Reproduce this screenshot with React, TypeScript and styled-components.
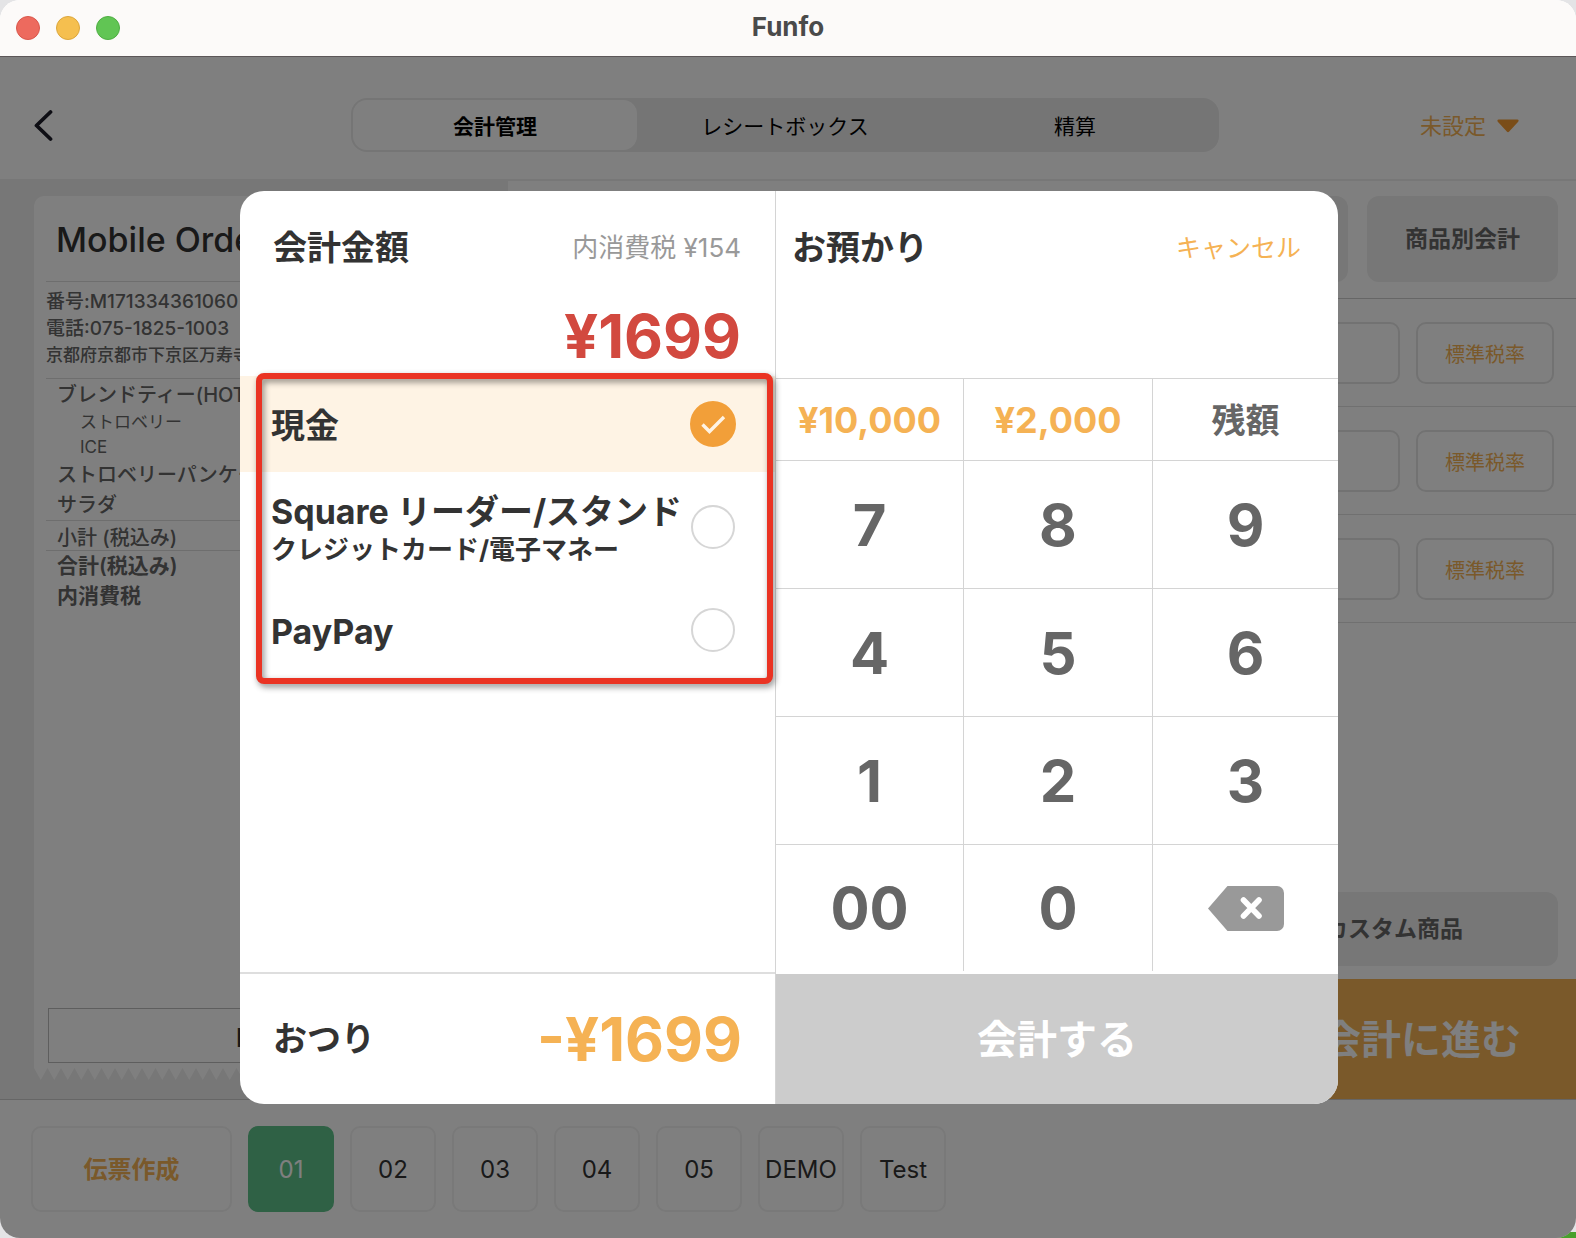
import React, { useState } from "react";
import styled, { createGlobalStyle } from "styled-components";

const FONT = `Inter, "Noto Sans CJK JP", "Noto Sans", sans-serif`;

const color = {
  ink: "#333333",
  mid: "#666666",
  faint: "#999999",
  orange: "#f5b254",
  red: "#d2493f",
  line: "#d4d4d4",
  panel: "#eeeeee",
};

const GlobalStyle = createGlobalStyle`
  * { box-sizing: border-box; }
  body { margin: 0; font-family: ${FONT}; color: ${color.ink}; }
  button, input, select { font: inherit; color: inherit; margin: 0; padding: 0; border: 0; background: none; }
  button { cursor: pointer; }
  h1, h2, p, ul { margin: 0; padding: 0; font: inherit; list-style: none; }
`;

/* ---------- window ---------- */

const Desktop = styled.div`
  min-height: 100vh;
  display: flex;
  background: linear-gradient(#48a02c, #48a02c) right bottom / 32px 6px no-repeat, #e4e4e6;
`;

const Window = styled.div`
  flex: 1;
  min-width: 0;
  display: flex;
  flex-direction: column;
  border-radius: 20px;
  overflow: hidden;
  background: #ffffff;
`;

const TitleBar = styled.div`
  display: grid;
  grid-template-columns: 1fr auto 1fr;
  align-items: center;
  height: 57px;
  padding: 0 16px;
  background: #fcfaf9;
  border-bottom: 1px solid #5c5658;
`;

const Lights = styled.div`
  display: flex;
  gap: 16px;
`;

const Light = styled.button<{ $fill: string; $edge: string }>`
  width: 24px;
  height: 24px;
  border-radius: 50%;
  background: ${(p) => p.$fill};
  border: 1px solid ${(p) => p.$edge};
`;

const WindowTitle = styled.h1`
  padding-bottom: 2px;
  font-size: 26px;
  line-height: 32px;
  font-weight: 700;
  color: #4a4a4a;
`;

const Body = styled.div`
  position: relative;
  flex: 1;
  display: flex;
  flex-direction: column;
`;

/* ---------- header ---------- */

const Header = styled.header`
  display: grid;
  grid-template-columns: 1fr minmax(0, 868px) 1fr;
  align-items: center;
  padding: 41px 34px 27px 28px;
  border-bottom: 2px solid ${color.panel};
`;

const BackButton = styled.button`
  justify-self: start;
  padding: 2px 6px 0;
  display: flex;
`;

const Tabs = styled.nav`
  display: grid;
  grid-template-columns: repeat(3, 1fr);
  gap: 6px;
  height: 54px;
  padding: 2px;
  border-radius: 16px;
  background: #ebebeb;
`;

const Tab = styled.button<{ $active?: boolean }>`
  padding-top: 3px;
  border-radius: 14px;
  font-size: 21px;
  line-height: 28px;
  color: #000000;
  font-weight: ${(p) => (p.$active ? 700 : 400)};
  background: ${(p) => (p.$active ? "#ffffff" : "transparent")};
`;

const Staff = styled.label`
  justify-self: end;
  display: flex;
  align-items: center;
  gap: 10px;
  padding: 2px 23px 0 0;
  color: ${color.orange};
`;

const StaffSelect = styled.select`
  appearance: none;
  font-size: 22px;
  line-height: 30px;
`;

/* ---------- main area ---------- */

const Main = styled.main`
  flex: 1;
  display: flex;
`;

const ReceiptPane = styled.section`
  flex: 0 0 508px;
  display: flex;
  flex-direction: column;
  padding: 15px 52px 19px 34px;
  background: ${color.panel};
`;

const Receipt = styled.article`
  flex: 1;
  display: flex;
  flex-direction: column;
  padding: 0 12px 5px;
  border-radius: 10px 10px 0 0;
  background: #ffffff;
  color: ${color.mid};
  font-weight: 500;
`;

const ShopName = styled.h2`
  padding: 22px 10px 19px;
  font-size: 34px;
  line-height: 44px;
  font-weight: 500;
  color: ${color.ink};
`;

const ReceiptInfo = styled.div`
  padding: 6px 0 9px;
  border-top: 1px solid #dcdcdc;
  line-height: 27px;
`;

const InfoLine = styled.p<{ $size: number }>`
  font-size: ${(p) => p.$size}px;
  white-space: nowrap;
`;

const ReceiptGroup = styled.ul<{ $pad: number }>`
  padding: ${(p) => p.$pad}px 11px 0;
  border-top: 1px solid #dcdcdc;
`;

const ReceiptItem = styled.li`
  font-size: 20px;
  line-height: 30px;
  white-space: nowrap;
`;

const ReceiptOption = styled.li`
  padding-left: 23px;
  font-size: 17px;
  line-height: 25px;
  font-weight: 400;
`;

const ReceiptSubtotal = styled.li`
  font-size: 20px;
  line-height: 24px;
`;

const ReceiptTotal = styled.li`
  font-size: 21px;
  line-height: 30px;
  font-weight: 600;
`;

const ReceiptButton = styled.button`
  margin: auto 2px 0;
  height: 55px;
  padding-top: 5px;
  border: 1px solid #bcbcbc;
  font-size: 25px;
  line-height: 32px;
  font-weight: 600;
  color: ${color.ink};
`;

const Teeth = styled.svg`
  display: block;
  width: 100%;
  height: 12px;
`;

const OrderPane = styled.section`
  flex: 1;
  min-width: 0;
  display: flex;
  flex-direction: column;
`;

const SplitRow = styled.div`
  display: grid;
  grid-template-columns: repeat(5, 1fr);
  gap: 19px;
  padding: 15px 18px 16px;
  border-bottom: 1px solid #cccccc;
`;

const SoftButton = styled.button<{ $height: number; $column: number }>`
  grid-column: ${(p) => p.$column};
  height: ${(p) => p.$height}px;
  border-radius: 12px;
  background: ${color.panel};
  font-size: 23px;
  line-height: 30px;
  font-weight: 700;
  color: ${color.mid};
  white-space: nowrap;
`;

const OrderRow = styled.div`
  display: flex;
  justify-content: flex-end;
  align-items: center;
  gap: 16px;
  height: 108px;
  padding: 1px 22px 0;
  border-bottom: 1px solid #e0e0e0;
`;

const OutlineButton = styled.button`
  width: 138px;
  height: 62px;
  padding-top: 4px;
  border: 2px solid #e4e4e4;
  border-radius: 10px;
  font-size: 20px;
  line-height: 28px;
  color: ${color.orange};
`;

const CustomRow = styled.div`
  display: grid;
  grid-template-columns: repeat(3, 1fr);
  gap: 24px;
  margin-top: auto;
  padding: 12px 18px 13px;
`;

const CheckoutRow = styled.div`
  display: flex;
  justify-content: flex-end;
`;

const CheckoutButton = styled.button`
  width: 310px;
  height: 120px;
  padding-top: 2px;
  background: ${color.orange};
  font-size: 40px;
  line-height: 48px;
  font-weight: 700;
  color: #ffffff;
  white-space: nowrap;
`;

/* ---------- slip bar ---------- */

const SlipBar = styled.footer`
  display: flex;
  gap: 16px;
  padding: 26px 31px;
  border-top: 1px solid #cccccc;
`;

const SlipButton = styled.button<{ $active?: boolean }>`
  width: 86px;
  height: 86px;
  padding-top: 2px;
  border: 2px solid ${(p) => (p.$active ? "#5ec28a" : "#f2f2f2")};
  border-radius: 10px;
  background: ${(p) => (p.$active ? "#5ec28a" : "transparent")};
  font-size: 24px;
  line-height: 32px;
  color: ${(p) => (p.$active ? "#ffffff" : color.ink)};
`;

const NewSlipButton = styled(SlipButton)`
  width: 201px;
  font-weight: 700;
  color: ${color.orange};
`;

/* ---------- payment dialog ---------- */

const Backdrop = styled.div`
  position: absolute;
  inset: 0;
  display: flex;
  align-items: center;
  justify-content: center;
  padding-left: 2px;
  background: rgba(0, 0, 0, 0.5);
`;

const Dialog = styled.div`
  display: grid;
  grid-template-columns: 536fr 562fr;
  width: 70%;
  max-width: 1098px;
  border-radius: 24px;
  overflow: hidden;
  background: #ffffff;
`;

const Column = styled.div<{ $divided?: boolean }>`
  display: flex;
  flex-direction: column;
  min-width: 0;
  border-right: ${(p) => (p.$divided ? `1px solid ${color.line}` : "0")};
`;

const AmountHead = styled.div`
  padding: 35px 34px 0 33px;
  height: 185px;
`;

const HeadLine = styled.div`
  display: flex;
  justify-content: space-between;
  align-items: center;
`;

const Heading = styled.h2`
  font-size: 34px;
  line-height: 44px;
  font-weight: 700;
`;

const TaxNote = styled.p`
  font-size: 26px;
  line-height: 32px;
  color: ${color.faint};
`;

const BigAmount = styled.p<{ $tone: string }>`
  font-size: 60px;
  line-height: 68px;
  font-weight: 700;
  text-align: right;
  color: ${(p) => p.$tone};
`;

const AmountLine = styled.div`
  padding-top: 32px;
`;

const Methods = styled.div`
  position: relative;
  display: flex;
  flex-direction: column;
  gap: 7px;
`;

const Method = styled.label<{ $selected: boolean }>`
  display: flex;
  justify-content: space-between;
  align-items: center;
  height: 96px;
  padding: 0 39px 0 31px;
  background: ${(p) => (p.$selected ? "#fef3e4" : "transparent")};
  cursor: pointer;
`;

const MethodText = styled.span`
  padding-top: 4px;
`;

const MethodName = styled.span`
  display: block;
  font-size: 34px;
  line-height: 42px;
  font-weight: 700;
  white-space: nowrap;
`;

const MethodNote = styled.span`
  display: block;
  font-size: 26px;
  line-height: 34px;
  font-weight: 700;
  white-space: nowrap;
`;

const RadioSlot = styled.span`
  display: grid;
  place-items: center;
  width: 46px;
  height: 46px;
  flex: none;

  & > * {
    grid-area: 1 / 1;
  }

  & > svg {
    pointer-events: none;
  }
`;

const Radio = styled.input`
  appearance: none;
  width: 44px;
  height: 44px;
  border: 2px solid #d6d6d6;
  border-radius: 50%;
  background: #ffffff;

  &:checked {
    width: 46px;
    height: 46px;
    border-color: #f29f39;
    background: #f29f39;
  }
`;

const Highlight = styled.div`
  position: absolute;
  inset: -3px 2px -6px 16px;
  border: 6px solid #ea3323;
  border-radius: 8px;
  filter: drop-shadow(2px 3px 3px rgba(0, 0, 0, 0.45));
  pointer-events: none;
`;

const ChangeRow = styled.div`
  display: flex;
  justify-content: space-between;
  align-items: center;
  height: 132px;
  margin-top: auto;
  padding: 0 33px;
  border-top: 2px solid #dedede;
`;

const DepositHead = styled.div`
  height: 187px;
  padding: 35px 37px 0 16px;
`;

const CancelButton = styled.button`
  font-size: 25px;
  line-height: 32px;
  color: ${color.orange};
`;

const Keypad = styled.div`
  display: grid;
  grid-template-columns: 188fr 189fr 185fr;
  grid-template-rows: 82px repeat(3, 128px) 127px;
  padding-bottom: 3px;
`;

const Key = styled.button`
  display: grid;
  place-items: center;
  border-top: 1px solid ${color.line};
  border-right: 1px solid ${color.line};
  font-size: 58px;
  line-height: 68px;
  font-weight: 700;
  color: ${color.mid};

  &:nth-child(3n) {
    border-right: 0;
  }
`;

const CashKey = styled(Key)`
  font-size: 36px;
  line-height: 44px;
  color: ${color.orange};
`;

const BalanceKey = styled(Key)`
  padding-top: 2px;
  font-size: 34px;
  line-height: 44px;
`;

const PayButton = styled.button`
  height: 130px;
  padding-top: 2px;
  background: #cccccc;
  font-size: 40px;
  line-height: 48px;
  font-weight: 700;
  color: #ffffff;
`;

/* ---------- icons ---------- */

const BackIcon = () => (
  <svg width="20" height="34" viewBox="0 0 20 34" fill="none" aria-hidden="true">
    <path d="M16.5 3 L2.5 16.5 L16.5 30" stroke="#1c1c28" strokeWidth="3.8" strokeLinecap="round" strokeLinejoin="round" />
  </svg>
);

const CaretIcon = () => (
  <svg width="22" height="14" viewBox="0 0 22 14" aria-hidden="true">
    <path d="M1.8 0.5 H20.2 Q22.4 0.8 21.2 2.8 L12.2 12.6 Q11 13.7 9.8 12.6 L0.8 2.8 Q-0.4 0.8 1.8 0.5 Z" fill="#f49a30" />
  </svg>
);

const CheckIcon = () => (
  <svg width="46" height="46" viewBox="0 0 46 46" fill="none" aria-hidden="true">
    <path d="M12.5 23.5 L19.5 30.5 L34 16" stroke="#fef3e4" strokeWidth="3.4" />
  </svg>
);

const EraseIcon = () => (
  <svg width="76" height="45" viewBox="0 0 76 45" aria-hidden="true">
    <path d="M19.5 0 H69 A7 7 0 0 1 76 7 V38 A7 7 0 0 1 69 45 H19.5 L0 22.5 Z" fill="#999999" />
    <path d="M35.5 14 L51 30 M51 14 L35.5 30" stroke="#ffffff" strokeWidth="5.6" strokeLinecap="round" />
  </svg>
);

const ReceiptEdge = () => (
  <Teeth aria-hidden="true">
    <defs>
      <pattern id="teeth" width="27" height="12" patternUnits="userSpaceOnUse">
        <path d="M0 0 L6.75 12 L13.5 0 L20.25 12 L27 0 Z" fill="#ffffff" />
      </pattern>
    </defs>
    <rect width="100%" height="12" fill="url(#teeth)" />
  </Teeth>
);

/* ---------- data ---------- */

const methods = [
  { id: "cash", name: "現金" },
  { id: "square", name: "Square リーダー/スタンド", note: "クレジットカード/電子マネー" },
  { id: "paypay", name: "PayPay" },
];

const digits = ["7", "8", "9", "4", "5", "6", "1", "2", "3", "00", "0"];
const slips = ["01", "02", "03", "04", "05", "DEMO", "Test"];

export default function App() {
  const [method, setMethod] = useState("cash");

  return (
    <Desktop>
      <GlobalStyle />
      <Window>
        <TitleBar>
          <Lights>
            <Light aria-label="閉じる" $fill="#ed6a5e" $edge="#d9574c" />
            <Light aria-label="しまう" $fill="#f5bf4f" $edge="#dba63c" />
            <Light aria-label="拡大" $fill="#61c554" $edge="#4fae43" />
          </Lights>
          <WindowTitle>Funfo</WindowTitle>
        </TitleBar>

        <Body>
          <Header>
            <BackButton aria-label="戻る">
              <BackIcon />
            </BackButton>
            <Tabs>
              <Tab $active>会計管理</Tab>
              <Tab>レシートボックス</Tab>
              <Tab>精算</Tab>
            </Tabs>
            <Staff>
              <StaffSelect aria-label="担当者">
                <option>未設定</option>
              </StaffSelect>
              <CaretIcon />
            </Staff>
          </Header>

          <Main>
            <ReceiptPane>
              <Receipt>
                <ShopName>Mobile Order</ShopName>
                <ReceiptInfo>
                  <InfoLine $size={19}>番号:M171334361060</InfoLine>
                  <InfoLine $size={19}>電話:075-1825-1003</InfoLine>
                  <InfoLine $size={17}>京都府京都市下京区万寿寺</InfoLine>
                </ReceiptInfo>
                <ReceiptGroup $pad={1}>
                  <ReceiptItem>ブレンドティー(HOT)</ReceiptItem>
                  <ReceiptOption>ストロベリー</ReceiptOption>
                  <ReceiptOption>ICE</ReceiptOption>
                  <ReceiptItem>ストロベリーパンケーキ</ReceiptItem>
                  <ReceiptItem>サラダ</ReceiptItem>
                </ReceiptGroup>
                <ReceiptGroup $pad={5}>
                  <ReceiptSubtotal>小計 (税込み)</ReceiptSubtotal>
                </ReceiptGroup>
                <ReceiptGroup $pad={0}>
                  <ReceiptTotal>合計(税込み)</ReceiptTotal>
                  <ReceiptTotal>内消費税</ReceiptTotal>
                </ReceiptGroup>
                <ReceiptButton>D</ReceiptButton>
              </Receipt>
              <ReceiptEdge />
            </ReceiptPane>

            <OrderPane>
              <SplitRow>
                <SoftButton $height={86} $column={4} aria-label="個別会計" />
                <SoftButton $height={86} $column={5}>商品別会計</SoftButton>
              </SplitRow>
              {[1, 2, 3].map((n) => (
                <OrderRow key={n}>
                  <OutlineButton aria-label={`割引 ${n}`} />
                  <OutlineButton>標準税率</OutlineButton>
                </OrderRow>
              ))}
              <CustomRow>
                <SoftButton $height={74} $column={3}>カスタム商品</SoftButton>
              </CustomRow>
              <CheckoutRow>
                <CheckoutButton>会計に進む</CheckoutButton>
              </CheckoutRow>
            </OrderPane>
          </Main>

          <SlipBar>
            <NewSlipButton>伝票作成</NewSlipButton>
            {slips.map((name, i) => (
              <SlipButton key={name} $active={i === 0}>
                {name}
              </SlipButton>
            ))}
          </SlipBar>

          <Backdrop>
            <Dialog role="dialog" aria-label="会計">
              <Column $divided>
                <AmountHead>
                  <HeadLine>
                    <Heading>会計金額</Heading>
                    <TaxNote>内消費税 ¥154</TaxNote>
                  </HeadLine>
                  <AmountLine>
                    <BigAmount $tone={color.red}>¥1699</BigAmount>
                  </AmountLine>
                </AmountHead>
                <Methods role="radiogroup" aria-label="支払い方法">
                  {methods.map((m) => (
                    <Method key={m.id} $selected={method === m.id}>
                      <MethodText>
                        <MethodName>{m.name}</MethodName>
                        {m.note && <MethodNote>{m.note}</MethodNote>}
                      </MethodText>
                      <RadioSlot>
                        <Radio
                          type="radio"
                          name="method"
                          checked={method === m.id}
                          onChange={() => setMethod(m.id)}
                        />
                        {method === m.id && <CheckIcon />}
                      </RadioSlot>
                    </Method>
                  ))}
                  <Highlight />
                </Methods>
                <ChangeRow>
                  <Heading>おつり</Heading>
                  <BigAmount $tone={color.orange}>-¥1699</BigAmount>
                </ChangeRow>
              </Column>

              <Column>
                <DepositHead>
                  <HeadLine>
                    <Heading>お預かり</Heading>
                    <CancelButton>キャンセル</CancelButton>
                  </HeadLine>
                </DepositHead>
                <Keypad>
                  <CashKey>¥10,000</CashKey>
                  <CashKey>¥2,000</CashKey>
                  <BalanceKey>残額</BalanceKey>
                  {digits.map((d) => (
                    <Key key={d}>{d}</Key>
                  ))}
                  <Key aria-label="一文字削除">
                    <EraseIcon />
                  </Key>
                </Keypad>
                <PayButton>会計する</PayButton>
              </Column>
            </Dialog>
          </Backdrop>
        </Body>
      </Window>
    </Desktop>
  );
}
